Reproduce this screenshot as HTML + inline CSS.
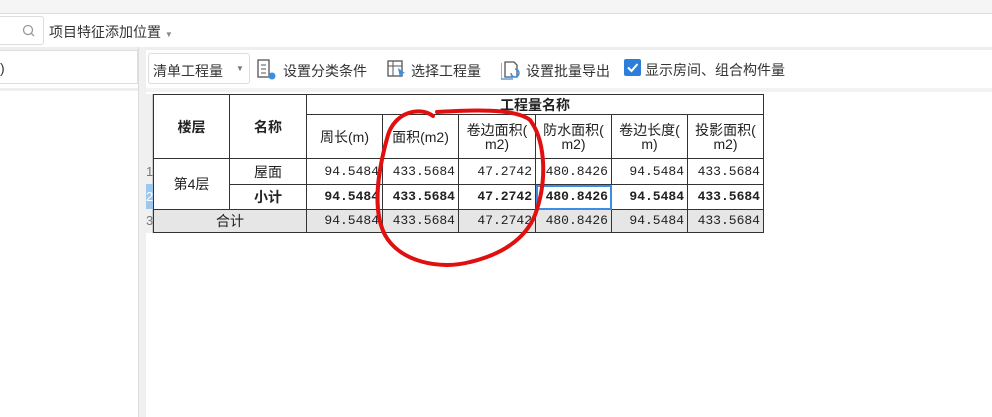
<!DOCTYPE html>
<html><head><meta charset="utf-8"><style>
*{margin:0;padding:0;box-sizing:border-box}
body{width:992px;height:417px;overflow:hidden;background:#fff;position:relative;font-family:"Liberation Sans","Noto Sans CJK SC",sans-serif;font-size:14px;color:#222}
.a{position:absolute}
table{border-collapse:collapse;position:absolute;left:153px;top:94px;font-family:"Liberation Mono","Noto Sans CJK SC",monospace;font-size:13px}
td{border:1px solid #333;padding:0 3px;text-align:right;white-space:nowrap;line-height:14px}
td.c{text-align:center;font-family:"Liberation Sans","Noto Sans CJK SC",sans-serif;font-size:14px}
.b td{font-weight:bold}
.g td{background:#e6e6e6}
.rh{position:absolute;left:146px;width:7px;font-size:13px;color:#777;line-height:13px}
</style></head><body>
<div class="a" style="left:0;top:0;width:992px;height:14px;background:#f5f5f5;border-bottom:1px solid #ddd"></div>
<div class="a" style="left:-5px;top:16px;width:49px;height:29px;border:1px solid #ddd;border-radius:3px"></div>
<svg class="a" style="left:22px;top:24px" width="14" height="14"><circle cx="6" cy="6" r="4.5" fill="none" stroke="#999" stroke-width="1.3"/><line x1="9.5" y1="9.5" x2="12" y2="12" stroke="#999" stroke-width="1.3"/></svg>
<div class="a" style="left:49px;top:22px;font-size:14px;color:#333">项目特征添加位置 <span style="font-size:8px;color:#888">▼</span></div>
<div class="a" style="left:0;top:47px;width:992px;height:3px;background:#eee"></div>
<div class="a" style="left:0;top:50px;width:138px;height:34px;border:1px solid #ddd;border-left:none"></div>
<div class="a" style="left:0;top:60px;font-size:14px;color:#333">)</div>
<div class="a" style="left:0;top:88px;width:138px;height:3px;background:#eee"></div>
<div class="a" style="left:138px;top:47px;width:8px;height:370px;background:#f0f0f0;border-left:1px solid #ddd"></div>
<div class="a" style="left:146px;top:88px;width:846px;height:4px;background:#f3f3f3"></div>
<div class="a" style="left:148px;top:53px;width:102px;height:31px;border:1px solid #ddd;border-radius:3px"></div>
<div class="a" style="left:153px;top:61px;color:#333">清单工程量</div>
<div class="a" style="left:236px;top:64px;font-size:8px;color:#777">▼</div>
<svg class="a" style="left:257px;top:59px" width="20" height="22"><rect x="1" y="1" width="11" height="17" fill="none" stroke="#555" stroke-width="1.3"/><line x1="4" y1="6" x2="9" y2="6" stroke="#555"/><line x1="4" y1="10" x2="9" y2="10" stroke="#555"/><line x1="4" y1="14" x2="9" y2="14" stroke="#555"/><circle cx="15" cy="17" r="3.5" fill="#3b8ee0"/></svg>
<div class="a" style="left:283px;top:61px;color:#333">设置分类条件</div>
<svg class="a" style="left:387px;top:59px" width="20" height="22"><rect x="1" y="2" width="14" height="15" fill="none" stroke="#555" stroke-width="1.3"/><line x1="1" y1="7" x2="15" y2="7" stroke="#555"/><line x1="6" y1="2" x2="6" y2="17" stroke="#555"/><path d="M11 9 L18 14 L14 15 L13 19 Z" fill="#3b8ee0"/></svg>
<div class="a" style="left:411px;top:61px;color:#333">选择工程量</div>
<svg class="a" style="left:501px;top:59px" width="20" height="22"><path d="M4 3 H13 L16 6 V18 H4 Z" fill="none" stroke="#555" stroke-width="1.3"/><path d="M0 4 V20 H12" fill="none" stroke="#3b8ee0" stroke-width="1.3"/><path d="M14 10 A4 4 0 1 1 10 14" fill="none" stroke="#3b8ee0" stroke-width="1.5"/></svg>
<div class="a" style="left:526px;top:61px;color:#333">设置批量导出</div>
<div class="a" style="left:624px;top:59px;width:17px;height:17px;background:#2b7fd8;border-radius:2px"></div>
<svg class="a" style="left:624px;top:59px" width="17" height="17"><path d="M4 8.5 L7.5 12 L13.5 5" fill="none" stroke="#fff" stroke-width="2"/></svg>
<div class="a" style="left:645px;top:60px;color:#333">显示房间、组合构件量</div>

<div class="a" style="left:146px;top:94px;width:7px;height:139px;background:#f0f0f0;border-right:1px solid #ccc"></div>
<div class="rh" style="top:165px">1</div>
<div class="rh" style="top:184px;height:25px;background:#9cc8f0;color:#fff;padding-top:6px">2</div>
<div class="rh" style="top:214px">3</div>

<table>
<colgroup><col style="width:76px"><col style="width:77px"><col style="width:76px"><col style="width:76px"><col style="width:77px"><col style="width:76px"><col style="width:76px"><col style="width:76px"></colgroup>
<tr style="height:20px"><td class="c" rowspan="2" style="font-weight:bold">楼层</td><td class="c" rowspan="2" style="font-weight:bold">名称</td><td class="c" colspan="6" style="font-weight:bold">工程量名称</td></tr>
<tr style="height:44px"><td class="c">周长(m)</td><td class="c">面积(m2)</td><td class="c">卷边面积(<br>m2)</td><td class="c">防水面积(<br>m2)</td><td class="c">卷边长度(<br>m)</td><td class="c">投影面积(<br>m2)</td></tr>
<tr style="height:26px"><td class="c" rowspan="2">第4层</td><td class="c">屋面</td><td>94.5484</td><td>433.5684</td><td>47.2742</td><td>480.8426</td><td>94.5484</td><td>433.5684</td></tr>
<tr style="height:25px" class="b"><td class="c">小计</td><td>94.5484</td><td>433.5684</td><td>47.2742</td><td style="outline:2px solid #3b8ee0;outline-offset:-2px">480.8426</td><td>94.5484</td><td>433.5684</td></tr>
<tr style="height:23px" class="g"><td class="c" colspan="2">合计</td><td>94.5484</td><td>433.5684</td><td>47.2742</td><td>480.8426</td><td>94.5484</td><td>433.5684</td></tr>
</table>

<svg class="a" style="left:0;top:0" width="992" height="417"><path d="M433,116 C420,106 395,112 388,135 C378,170 372,210 385,235 C400,262 440,270 470,262 C500,255 525,240 535,215 C548,180 545,140 530,120 C515,108 470,110 437,112" fill="none" stroke="#e01010" stroke-width="4" stroke-linecap="round"/></svg>
</body></html>
